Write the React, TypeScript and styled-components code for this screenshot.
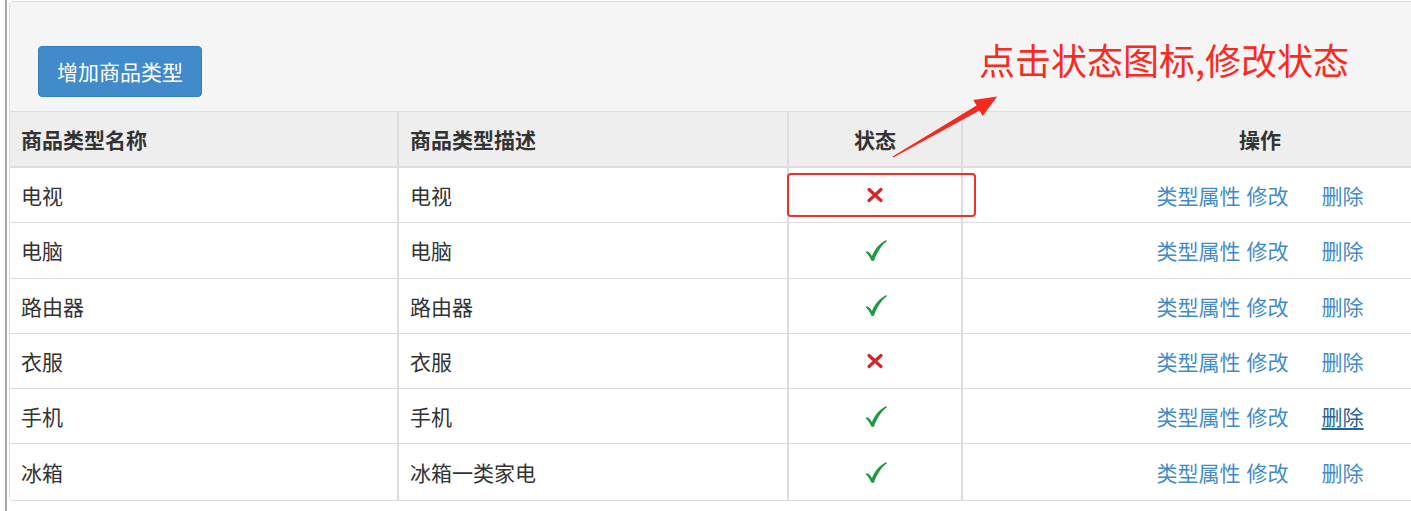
import styled, { createGlobalStyle } from "styled-components";

type ItemType = {
  name: string
  desc: string
  enabled: boolean
}

const items: ItemType[] = [
  { name: "电视", desc: "电视", enabled: false },
  { name: "电脑", desc: "电脑", enabled: true },
  { name: "路由器", desc: "路由器", enabled: true },
  { name: "衣服", desc: "衣服", enabled: false },
  { name: "手机", desc: "手机", enabled: true },
  { name: "冰箱", desc: "冰箱一类家电", enabled: true },
]

const GlobalStyle = createGlobalStyle`
  html, body {
    margin: 0;
    padding: 0;
    background: #fff;
    overflow: hidden;
  }
  body {
    font-family: "Noto Sans CJK SC", "Noto Sans", sans-serif;
    color: #333;
  }
`

const Page = styled.div`
  position: relative;
  width: 1411px;
  height: 511px;
  padding-left: 5px;
  box-sizing: border-box;
  overflow: hidden;
`

const Rail = styled.div`
  border-left: 2px solid #a6a6a6;
  padding: 1px 0 0 2px;
  height: 100%;
  box-sizing: border-box;
`

const Panel = styled.div`
  width: 1560px;
  border: 1px solid #ddd;
  border-radius: 4px;
  overflow: hidden;
  background: #fff;
`

const Heading = styled.div`
  background: #f5f5f5;
  border-bottom: 1px solid #ddd;
  padding: 44px 0 14px 28px;
`

const PrimaryButton = styled.button`
  height: 51px;
  padding: 0 18px;
  border: 1px solid #357ebd;
  border-radius: 4px;
  background: #428bca;
  color: #fff;
  font-family: inherit;
  font-size: 21px;
  line-height: 1;
  cursor: pointer;
`

const Row = styled.div<{ $head?: boolean }>`
  display: grid;
  grid-template-columns: 387px 390px 174px 596px;
  height: ${p => (p.$head ? "56px" : "55.3px")};
  box-sizing: border-box;
  background: ${p => (p.$head ? "#eee" : "#fff")};
  border-bottom: ${p => (p.$head ? "2px" : "1px")} solid #ddd;

  &:last-child {
    border-bottom: none;
  }
`

const Cell = styled.div<{ $align?: "left" | "center"; $bold?: boolean }>`
  display: flex;
  align-items: center;
  justify-content: ${p => (p.$align === "center" ? "center" : "flex-start")};
  padding: 0 11px;
  font-size: 21px;
  font-weight: ${p => (p.$bold ? 700 : 400)};
  color: #333;

  & + & {
    border-left: 2px solid #ddd;
  }
`

const Actions = styled.div`
  display: flex;
  align-items: center;
`

const Link = styled.a<{ $hover?: boolean; $gap?: number }>`
  color: ${p => (p.$hover ? "#2a6496" : "#428bca")};
  text-decoration: ${p => (p.$hover ? "underline" : "none")};
  text-underline-offset: 3px;
  margin-left: ${p => p.$gap ?? 0}px;
  cursor: pointer;
`

const Note = styled.div`
  position: absolute;
  left: 979px;
  top: 41px;
  font-size: 36px;
  line-height: 1;
  color: #fb2a1f;
  white-space: nowrap;
`

const Highlight = styled.div`
  position: absolute;
  left: 787px;
  top: 173px;
  width: 189px;
  height: 44px;
  box-sizing: border-box;
  border: 2px solid #f0302a;
  border-radius: 4px;
  pointer-events: none;
`

const ArrowSvg = styled.svg`
  position: absolute;
  left: 880px;
  top: 88px;
  pointer-events: none;
`

function StatusIcon({ on }: { on: boolean }) {
  if (on) {
    return (
      <svg width="25" height="25" viewBox="0 0 24 24">
        <path
          d="M2.3 13.4 C4.5 12.4 6.3 13.5 8.6 17.2 C12 9.8 16 5.4 22.2 2 L22.9 3.1 C17.6 7.2 13.6 13.2 10.5 21.9 L8.3 22.1 C6.5 18.2 4.7 15.4 2.3 13.4 Z"
          fill="#1f9a45"
        />
      </svg>
    )
  }
  return (
    <svg width="18" height="16" viewBox="0 0 18 16">
      <path d="M3 2.5 L15 13.5 M15 2.5 L3 13.5" stroke="#d8232b" strokeWidth="3.2" strokeLinecap="round" />
    </svg>
  )
}

export default function App() {
  return (
    <Page>
      <GlobalStyle />
      <Rail>
        <Panel>
          <Heading>
            <PrimaryButton>增加商品类型</PrimaryButton>
          </Heading>

          <Row $head>
            <Cell $bold>商品类型名称</Cell>
            <Cell $bold>商品类型描述</Cell>
            <Cell $bold $align="center">状态</Cell>
            <Cell $bold $align="center">操作</Cell>
          </Row>

          {items.map((item, i) => (
            <Row key={i}>
              <Cell>{item.name}</Cell>
              <Cell>{item.desc}</Cell>
              <Cell $align="center">
                <StatusIcon on={item.enabled} />
              </Cell>
              <Cell $align="center">
                <Actions>
                  <Link>类型属性</Link>
                  <Link $gap={6}>修改</Link>
                  <Link $gap={33} $hover={i === 4}>删除</Link>
                </Actions>
              </Cell>
            </Row>
          ))}
        </Panel>
      </Rail>

      <Highlight />
      <ArrowSvg width="125" height="75" viewBox="880 88 125 75">
        <polygon
          points="892.6,156.5 976.6,105.6 973.3,100 997.2,96.5 982.7,116 979.5,110.4 893.4,157.5"
          fill="#f52a1e"
        />
      </ArrowSvg>
      <Note>点击状态图标,修改状态</Note>
    </Page>
  )
}
